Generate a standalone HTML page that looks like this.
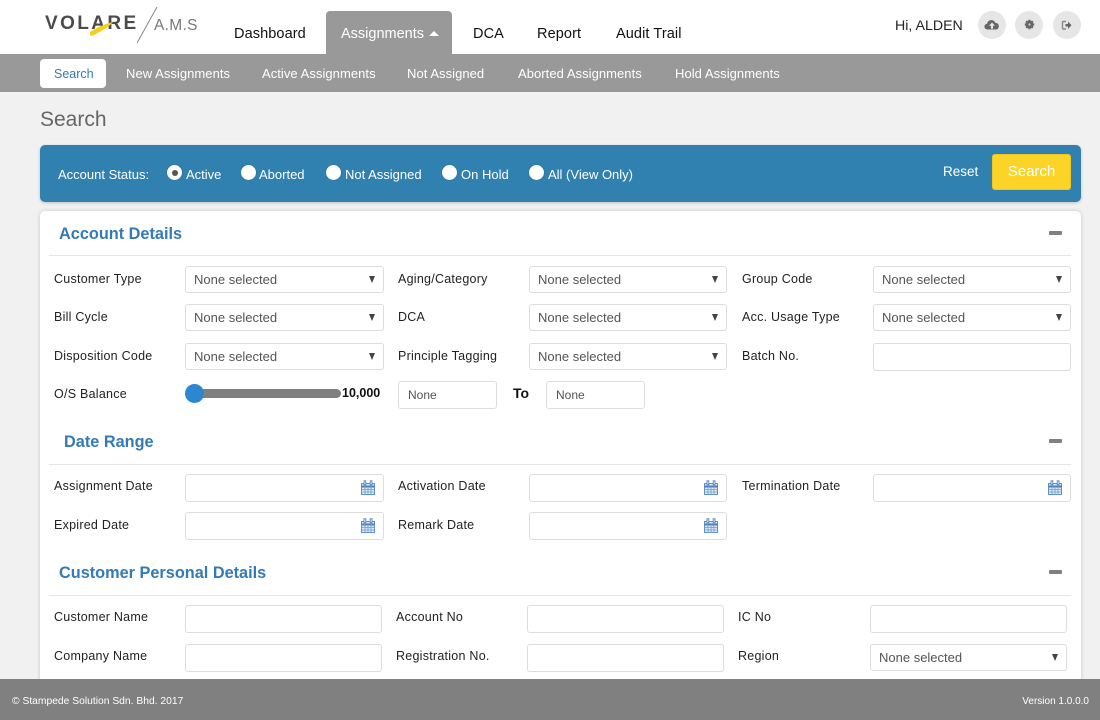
<!DOCTYPE html>
<html lang="en"><head><meta charset="utf-8"><title>Search</title>
<style>
*{box-sizing:border-box}
html,body{margin:0;padding:0}
body{width:1100px;height:720px;position:relative;overflow:hidden;background:#f1f1f1;font-family:"Liberation Sans",sans-serif;color:#222}
.a,.t,.b{position:absolute}
.t{white-space:nowrap;line-height:18px}
.n{font-size:14.5px;color:#111;top:25px;letter-spacing:.1px}
.s{font-size:13px;color:#fff;top:65px;letter-spacing:.05px}
.l{font-size:12.5px;color:#222;letter-spacing:.25px}
.h{font-size:16.3px;font-weight:bold;color:#337ab7;line-height:22px}
.b{background:#fff;border:1px solid #ddd;border-radius:3px;font-size:13px;color:#555;line-height:26px;padding-left:8px;height:28px}
.sel{height:27px}
.sel::after{content:"";position:absolute;right:8px;top:9px;border-left:3.5px solid transparent;border-right:3.5px solid transparent;border-top:7px solid #444}
.hr{position:absolute;height:1px;background:#e6e6e6;left:49px;width:1022px}
.m{position:absolute;left:1049px;width:13px;height:4px;background:#808080;border-radius:1px}
.r{position:absolute;top:165px;width:15px;height:15px;border-radius:50%;background:#fff;box-shadow:0 0 1px rgba(0,0,0,.4)}
.c{position:absolute;width:28px;height:28px;border-radius:50%;background:#e6e6e6;top:11px}
.cal{position:absolute;right:8px;top:5px}
.st{top:166px;font-size:13px;color:#fff}
</style></head><body>
<svg width="0" height="0" style="position:absolute"><defs>
<symbol id="cal" viewBox="0 0 14 15"><rect x=".5" y="3.500" width="13" height="11" fill="#dfe9f5" stroke="#5f90c8"/><path d="M.5 6.500h13" stroke="#4a80bd" stroke-width="2"/><path d="M.5 9.500h13M.5 12h13M4 5v10M7 5v10M10 5v10" stroke="#6f9bd0" stroke-width=".8"/><path d="M3 .800h1.800v4H3zM9.200 .800H11v4H9.200z" fill="#fff" stroke="#4a80bd" stroke-width=".9"/></symbol>
</defs></svg>

<div class="a" style="left:0;top:0;width:1100px;height:54px;background:#fff"></div>
<div class="t" style="left:45px;top:10px;font-size:19px;line-height:28px;font-weight:bold;color:#4b4b4d;letter-spacing:2.4px">VOLARE</div>
<svg class="a" style="left:40px;top:5px" width="130" height="42"><path d="M50 27C57 22 65 19 73 17C69 22 62 26 52 31L50 30Z" fill="#f4d01e"/><path d="M117 2L97 38" stroke="#888" stroke-width="1" fill="none"/></svg>
<div class="t" style="left:154px;top:14px;font-size:15.5px;line-height:24px;color:#777;letter-spacing:.3px">A.M.S</div>

<div class="t n" style="left:234px">Dashboard</div>
<div class="a" style="left:326px;top:11px;width:126px;height:43px;background:#999;border-radius:4px 4px 0 0"></div>
<div class="t n" style="left:341px;color:#fff;letter-spacing:0">Assignments</div>
<div class="a" style="left:429px;top:31px;border-left:5px solid transparent;border-right:5px solid transparent;border-bottom:5px solid #fff"></div>
<div class="t n" style="left:473px">DCA</div>
<div class="t n" style="left:537px">Report</div>
<div class="t n" style="left:616px">Audit Trail</div>

<div class="t" style="left:895px;top:17px;font-size:14.2px;color:#222">Hi, ALDEN</div>
<div class="c" style="left:978px"><svg width="28" height="28"><path d="M9.500 18.500a2.900 2.900 0 0 1-.4-5.800 4.300 4.300 0 0 1 8.200-1 3.500 3.500 0 0 1 1.200 6.800z" fill="#666"/><path d="M14 11.500l-3 3.300h2v3h2v-3h2z" fill="#e6e6e6"/></svg></div>
<div class="c" style="left:1015px"><svg width="28" height="28"><circle cx="14.500" cy="13.500" r="3.700" fill="#666"/><path d="M14.500 8.800v9.400M9.800 13.500h9.400M11.200 10.200l6.600 6.600M17.800 10.200l-6.600 6.600" stroke="#666" stroke-width="2.200"/><circle cx="14.500" cy="13.500" r="1.100" fill="#ccc"/></svg></div>
<div class="c" style="left:1053px"><svg width="28" height="28"><path d="M13 10.500h-2.500a1 1 0 0 0-1 1v5.500a1 1 0 0 0 1 1H13" fill="none" stroke="#888" stroke-width="1.400"/><path d="M12.500 13H15v-2.500l3.500 3.800L15 18v-2.500h-2.500z" fill="#666"/></svg></div>

<div class="a" style="left:0;top:54px;width:1100px;height:38px;background:#999"></div>
<div class="a" style="left:40px;top:59px;width:66px;height:29px;background:#fff;border-radius:4px"></div>
<div class="t s" style="left:54px;color:#337ab7;font-size:12.5px;letter-spacing:0">Search</div>
<div class="t s" style="left:126px">New Assignments</div>
<div class="t s" style="left:262px">Active Assignments</div>
<div class="t s" style="left:407px">Not Assigned</div>
<div class="t s" style="left:518px">Aborted Assignments</div>
<div class="t s" style="left:675px">Hold Assignments</div>

<div class="t" style="left:40px;top:106px;font-size:21px;line-height:28px;color:#666">Search</div>

<div class="a" style="left:40px;top:145px;width:1041px;height:57px;background:#3080b0;border-radius:5px;box-shadow:0 1px 3px rgba(0,0,0,.2)"></div>
<div class="t st" style="left:58px">Account Status:</div>
<div class="r" style="left:167px"><div class="a" style="left:4.500px;top:4.500px;width:6px;height:6px;border-radius:50%;background:#555"></div></div>
<div class="t st" style="left:186px">Active</div>
<div class="r" style="left:241px"></div>
<div class="t st" style="left:259px">Aborted</div>
<div class="r" style="left:326px"></div>
<div class="t st" style="left:345px">Not Assigned</div>
<div class="r" style="left:442px"></div>
<div class="t st" style="left:461px">On Hold</div>
<div class="r" style="left:529px"></div>
<div class="t st" style="left:548px">All (View Only)</div>
<div class="t" style="left:943px;top:163px;font-size:13.5px;color:#fff">Reset</div>
<div class="a" style="left:992px;top:154px;width:79px;height:36px;background:#fcd427;border:1px solid #f2c61c;border-radius:3px;color:#fff;font-size:15px;line-height:34px;text-align:center">Search</div>

<div class="a" style="left:40px;top:211px;width:1041px;height:480px;background:#fff;border-radius:5px;box-shadow:0 0 4px rgba(0,0,0,.18)"></div>

<div class="t h" style="left:59px;top:223px">Account Details</div><div class="m" style="top:231px"></div><div class="hr" style="top:255px"></div>
<div class="t l" style="left:54px;top:270px">Customer Type</div>
<div class="b sel" style="left:185px;top:266px;width:199px">None selected</div>
<div class="t l" style="left:398px;top:270px">Aging/Category</div>
<div class="b sel" style="left:529px;top:266px;width:198px">None selected</div>
<div class="t l" style="left:742px;top:270px">Group Code</div>
<div class="b sel" style="left:873px;top:266px;width:198px">None selected</div>

<div class="t l" style="left:54px;top:308px">Bill Cycle</div>
<div class="b sel" style="left:185px;top:304px;width:199px">None selected</div>
<div class="t l" style="left:398px;top:308px">DCA</div>
<div class="b sel" style="left:529px;top:304px;width:198px">None selected</div>
<div class="t l" style="left:742px;top:308px">Acc. Usage Type</div>
<div class="b sel" style="left:873px;top:304px;width:198px">None selected</div>

<div class="t l" style="left:54px;top:347px">Disposition Code</div>
<div class="b sel" style="left:185px;top:343px;width:199px">None selected</div>
<div class="t l" style="left:398px;top:347px">Principle Tagging</div>
<div class="b sel" style="left:529px;top:343px;width:198px">None selected</div>
<div class="t l" style="left:742px;top:347px">Batch No.</div>
<div class="b" style="left:873px;top:343px;width:198px"></div>

<div class="t l" style="left:54px;top:385px">O/S Balance</div>
<div class="a" style="left:190px;top:389px;width:151px;height:9px;background:#808080;border-radius:5px"></div>
<div class="a" style="left:185px;top:384px;width:19px;height:19px;border-radius:50%;background:#2b87cf"></div>
<div class="t" style="left:342px;top:384px;font-size:12.5px;font-weight:bold;color:#111">10,000</div>
<div class="b" style="left:398px;top:381px;width:99px;font-size:12px;padding-left:9px">None</div>
<div class="t" style="left:513px;top:384px;font-size:14px;font-weight:bold;color:#111">To</div>
<div class="b" style="left:546px;top:381px;width:99px;font-size:12px;padding-left:9px">None</div>

<div class="t h" style="left:64px;top:431px">Date Range</div><div class="m" style="top:439px"></div><div class="hr" style="top:464px"></div>
<div class="t l" style="left:54px;top:477px">Assignment Date</div>
<div class="b" style="left:185px;top:474px;width:199px"><svg class="cal" width="14" height="15"><use href="#cal"/></svg></div>
<div class="t l" style="left:398px;top:477px">Activation Date</div>
<div class="b" style="left:529px;top:474px;width:198px"><svg class="cal" width="14" height="15"><use href="#cal"/></svg></div>
<div class="t l" style="left:742px;top:477px">Termination Date</div>
<div class="b" style="left:873px;top:474px;width:198px"><svg class="cal" width="14" height="15"><use href="#cal"/></svg></div>
<div class="t l" style="left:54px;top:516px">Expired Date</div>
<div class="b" style="left:185px;top:512px;width:199px"><svg class="cal" width="14" height="15"><use href="#cal"/></svg></div>
<div class="t l" style="left:398px;top:516px">Remark Date</div>
<div class="b" style="left:529px;top:512px;width:198px"><svg class="cal" width="14" height="15"><use href="#cal"/></svg></div>

<div class="t h" style="left:59px;top:562px">Customer Personal Details</div><div class="m" style="top:570px"></div><div class="hr" style="top:595px"></div>
<div class="t l" style="left:54px;top:608px">Customer Name</div>
<div class="b" style="left:185px;top:605px;width:197px"></div>
<div class="t l" style="left:396px;top:608px">Account No</div>
<div class="b" style="left:527px;top:605px;width:197px"></div>
<div class="t l" style="left:738px;top:608px">IC No</div>
<div class="b" style="left:870px;top:605px;width:197px"></div>
<div class="t l" style="left:54px;top:647px">Company Name</div>
<div class="b" style="left:185px;top:644px;width:197px"></div>
<div class="t l" style="left:396px;top:647px">Registration No.</div>
<div class="b" style="left:527px;top:644px;width:197px"></div>
<div class="t l" style="left:738px;top:647px">Region</div>
<div class="b sel" style="left:870px;top:644px;width:197px">None selected</div>

<div class="a" style="left:0;top:679px;width:1100px;height:41px;background:#808080"></div>
<div class="t" style="left:12px;top:693px;font-size:10.3px;color:#fff">© Stampede Solution Sdn. Bhd. 2017</div>
<div class="t" style="right:11px;top:693px;font-size:10px;color:#fff">Version 1.0.0.0</div>
</body></html>
